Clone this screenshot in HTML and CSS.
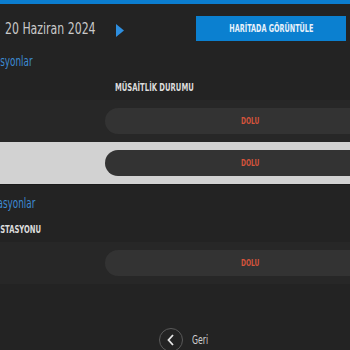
FILE: index.html
```html
<!DOCTYPE html>
<html lang="tr">
<head>
  <meta charset="UTF-8">
  <meta name="viewport" content="width=device-width, initial-scale=1.0">
  <title>İstasyon Durumu</title>
  <link rel="stylesheet" href="styles.css">
</head>
<body>
  <div class="topbar"></div>
  <div class="toolbar">
    <div class="date"><span class="cn">20 Haziran 2024</span></div>
    <button class="next" aria-label="Sonraki gün">
      <svg width="8" height="13" viewBox="0 0 8 13"><path d="M0 0 L8 6.5 L0 13 Z" fill="#2e8fe0"/></svg>
    </button>
    <button class="map-btn"><span class="cn">HARİTADA GÖRÜNTÜLE</span></button>
  </div>

  <div class="page">
    <h2 class="section-title"><span class="cn">Favori İstasyonlar</span></h2>
    <div class="table">
      <div class="row head">
        <div class="cell name"></div>
        <div class="cell status"><span class="cn">MÜSAİTLİK DURUMU</span></div>
      </div>
      <div class="row item">
        <div class="cell name"></div>
        <div class="cell status"><span class="pill"><span class="cn">DOLU</span></span></div>
      </div>
      <div class="row item selected">
        <div class="cell name"></div>
        <div class="cell status"><span class="pill"><span class="cn">DOLU</span></span></div>
      </div>
    </div>

    <h2 class="section-title second"><span class="cn">Yakın İstasyonlar</span></h2>
    <div class="table">
      <div class="row head">
        <div class="cell name"><span class="cn">ŞARJ İSTASYONU</span></div>
        <div class="cell status"></div>
      </div>
      <div class="row item">
        <div class="cell name"></div>
        <div class="cell status"><span class="pill"><span class="cn">DOLU</span></span></div>
      </div>
    </div>
  </div>

  <div class="back">
    <button class="back-btn" aria-label="Geri">
      <svg width="10" height="12" viewBox="0 0 10 12"><path d="M7 1 L2.5 6 L7 11" fill="none" stroke="#e6e6e6" stroke-width="1.8"/></svg>
    </button>
    <span class="cn">Geri</span>
  </div>
</body>
</html>
```

FILE: styles.css
```css
body {
  margin: 0;
  background-color: #232323;
  color: #cfcfcf;
  font-family: "DejaVu Sans Condensed", "DejaVu Sans", sans-serif;
  overflow: hidden;
}

/* condensed look: the text face is narrower than any installed font */
.cn {
  display: inline-block;
  white-space: nowrap;
  transform: scaleX(0.76);
  transform-origin: left center;
}

.topbar {
  height: 4px;
  background-color: #0b7dcf;
}

.toolbar {
  display: flex;
  align-items: center;
  height: 25px;
  margin-top: 12px;
  padding: 0 4px 0 5px;
}

.date {
  width: 111px;
  font-size: 16px;
  color: #c9c9c9;
}

.next {
  background: none;
  border: none;
  padding: 0;
  margin-top: 3px;
  display: flex;
}

.map-btn {
  margin-left: auto;
  width: 150px;
  height: 25px;
  border: none;
  background-color: #0b80d0;
  color: #e8f2fb;
  font-family: inherit;
  font-size: 10px;
  font-weight: bold;
  cursor: pointer;
}

.map-btn .cn {
  transform: scaleX(0.72);
  transform-origin: center;
}

.page {
  margin-left: -120px;
  width: 560px;
}

.section-title {
  margin: 7px 0 0;
  width: 153px;
  height: 26px;
  line-height: 26px;
  text-align: right;
  font-size: 14px;
  font-weight: normal;
  color: #3d8bd4;
}

.section-title.second {
  width: 155px;
  margin-top: 5px;
}

.section-title .cn {
  transform: scaleX(0.7);
  transform-origin: right center;
}

.table {
  display: flex;
  flex-direction: column;
}

.row {
  display: grid;
  grid-template-columns: 225px 290px;
}

.row.head {
  height: 26px;
  align-items: center;
  font-size: 10px;
  font-weight: bold;
  color: #dcdcdc;
}

.row.head .status {
  padding-left: 10px;
}

.row.head .name {
  text-align: right;
  padding-right: 64px;
}

.row.head .name .cn {
  transform-origin: right center;
}

.row.item {
  height: 42px;
  align-items: center;
  background-color: #272727;
}

.row.item.selected {
  background-color: #d2d2d2;
  border-bottom: 1px solid #1a1a1a;
}

.pill {
  display: flex;
  align-items: center;
  justify-content: center;
  height: 26px;
  border-radius: 13px;
  background-color: #333;
  color: #d6543c;
  font-size: 8px;
  font-weight: bold;
}

.pill .cn {
  transform: scaleX(0.82);
  transform-origin: center;
}

.back {
  display: flex;
  align-items: center;
  gap: 9px;
  margin-top: 44px;
  margin-left: 159px;
  font-size: 12px;
  color: #cfcfcf;
}

.back .cn {
  transform: scaleX(0.72);
}

.back-btn {
  width: 24px;
  height: 24px;
  border-radius: 50%;
  border: 1px solid #5a5a5a;
  background: none;
  padding: 0;
  display: flex;
  align-items: center;
  justify-content: center;
  cursor: pointer;
}
```
